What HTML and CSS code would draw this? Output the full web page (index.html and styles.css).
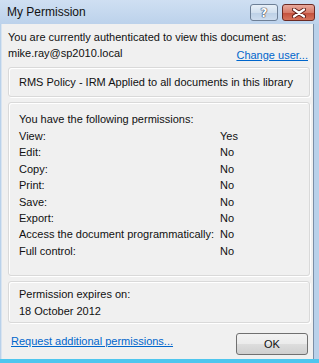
FILE: index.html
```html
<!DOCTYPE html>
<html>
<head>
    <title>My Permission</title>
    <link rel="stylesheet" href="styles.css">
</head>
<body>
    <div class="window">
        <div class="title-bar">
            <span class="title">My Permission</span>
            <div class="title-buttons">
                <span class="btn-help">?</span>
                <span class="btn-close">
                    <svg width="14" height="10" viewBox="0 0 14 10">
                        <path d="M2 1.5L12 8.5M12 1.5L2 8.5" stroke="#5a1a14" stroke-width="4" stroke-linecap="round"/>
                        <path d="M2 1.5L12 8.5M12 1.5L2 8.5" stroke="#ffffff" stroke-width="2.2" stroke-linecap="round"/>
                    </svg>
                </span>
            </div>
        </div>
        <div class="content">
            <div class="intro">You are currently authenticated to view this document as:</div>
            <div class="user-row">
                <span>mike.ray@sp2010.local</span>
                <a href="#" class="link">Change user...</a>
            </div>

            <div class="box policy">RMS Policy - IRM Applied to all documents in this library</div>

            <div class="box perms">
                <div class="perms-head">You have the following permissions:</div>
                <div class="perm-grid">
                    <span>View:</span><span>Yes</span>
                    <span>Edit:</span><span>No</span>
                    <span>Copy:</span><span>No</span>
                    <span>Print:</span><span>No</span>
                    <span>Save:</span><span>No</span>
                    <span>Export:</span><span>No</span>
                    <span>Access the document programmatically:</span><span>No</span>
                    <span>Full control:</span><span>No</span>
                </div>
            </div>

            <div class="box expires">
                <div>Permission expires on:</div>
                <div>18 October 2012</div>
            </div>

            <div class="footer">
                <a href="#" class="link">Request additional permissions...</a>
                <button class="ok">OK</button>
            </div>
        </div>
    </div>
</body>
</html>
```

FILE: styles.css
```css
body {
    margin: 0;
    font-family: 'Liberation Sans', Arial, sans-serif;
    font-size: 11px;
    color: #111;
}

.window {
    width: 319px;
    height: 363px;
    box-sizing: border-box;
    background: #b9d1ea;
    padding: 0 5px 4px 1px;
    display: flex;
    flex-direction: column;
    position: relative;
}

.window::after {
    content: "";
    position: absolute;
    left: 0;
    right: 0;
    bottom: 0;
    height: 4px;
    background: #4ec6ee;
}

.title-bar {
    height: 24px;
    flex: none;
    margin-left: -1px;
    margin-right: -5px;
    background: linear-gradient(#cfdff2, #bcd2eb);
    display: flex;
    align-items: flex-start;
    justify-content: space-between;
}

.title {
    font-size: 12px;
    padding: 3px 0 0 7px;
    line-height: 18px;
    color: #111;
}

.title-buttons {
    display: flex;
    gap: 4px;
    margin: 4px 4px 0 0;
}

.btn-help,
.btn-close {
    height: 15px;
    border: 1px solid #6d7f96;
    border-radius: 3px;
    display: flex;
    align-items: center;
    justify-content: center;
}

.btn-help {
    width: 26px;
    background: linear-gradient(#e8f0f8 0%, #d2e0ef 50%, #bcd0e6 51%, #cddcee 100%);
    font-family: 'DejaVu Sans', sans-serif;
    font-weight: bold;
    font-size: 12px;
    color: #fff;
    text-shadow: 0 0 1px #334, 0 0 1px #334, 0 0 1px #334;
}

.btn-close {
    width: 31px;
    border-color: #6b2a23;
    background: linear-gradient(#e9a99c 0%, #d77c6a 50%, #c24f3c 51%, #d6735b 100%);
}

.content {
    flex: 1;
    background: #f0f0f0;
    border-left: 1px solid #d9e4f0;
    border-right: 1px solid #7b8ea6;
    padding: 5px 3px 0 6px;
    display: flex;
    flex-direction: column;
}

.intro {
    line-height: 16px;
}

.user-row {
    display: flex;
    justify-content: space-between;
    line-height: 16px;
    margin-bottom: 6px;
}

.user-row .link {
    margin-right: 2px;
    position: relative;
    top: 2px;
}

.link {
    color: #0066cc;
    text-decoration: underline;
}

.box {
    border: 1px solid #d9d9d9;
    border-radius: 3px;
    box-shadow: inset 1px 1px 0 #fff, 1px 1px 0 #fff;
    padding: 0 10px;
    margin-bottom: 5px;
}

.policy {
    line-height: 28px;
}

.perms {
    padding-top: 8px;
    padding-bottom: 16px;
}

.perms-head {
    line-height: 16px;
    margin-bottom: 1px;
}

.perm-grid {
    display: grid;
    grid-template-columns: 201px auto;
    line-height: 16.4px;
}

.expires {
    padding-top: 4px;
    padding-bottom: 2px;
    line-height: 17px;
}

.footer {
    display: flex;
    justify-content: space-between;
    align-items: flex-start;
    margin-top: 5px;
    padding-left: 3px;
    padding-right: 2px;
}

.footer .link {
    margin-top: 2px;
}

.ok {
    width: 72px;
    height: 22px;
    border: 1px solid #707070;
    border-radius: 3px;
    background: linear-gradient(#f2f2f2 0%, #ebebeb 50%, #dddddd 51%, #cfcfcf 100%);
    font-family: 'Liberation Sans', Arial, sans-serif;
    font-size: 11px;
    color: #111;
    padding: 0;
}
```
